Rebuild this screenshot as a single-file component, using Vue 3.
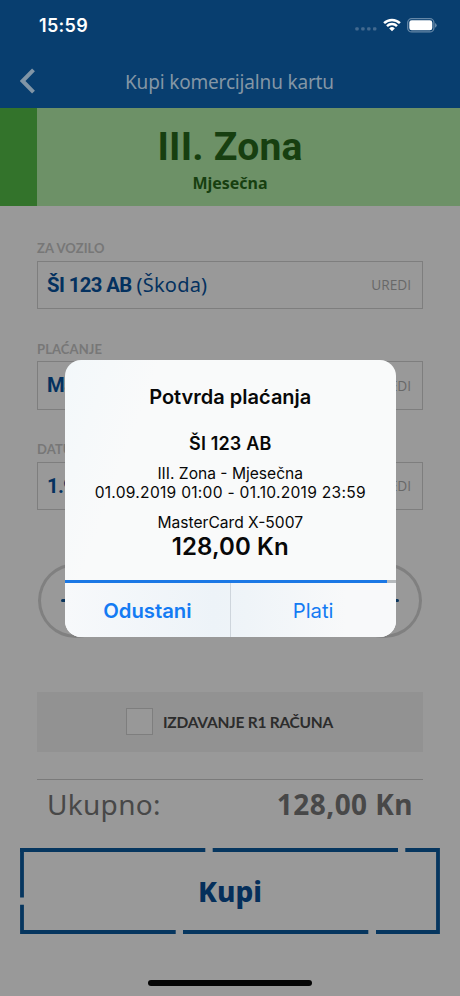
<script setup>
const fields = [
  { label: 'ZA VOZILO', strong: 'ŠI 123 AB', rest: '(Škoda)' },
  { label: 'PLAĆANJE', strong: 'MasterCard', rest: '' },
  { label: 'DATUM', strong: '1.9.', rest: '' },
]
</script>

<template>
  <div class="screen">
    <header class="top">
      <div class="status">
        <span class="clock">15:59</span>
        <div class="icons">
          <svg class="dots" width="22" height="4" viewBox="0 0 22 4">
            <rect v-for="i in 4" :key="i" :x="(i - 1) * 5.9 + 0.3" y="0.3" width="3.4" height="3.2" rx="1" />
          </svg>
          <svg class="wifi" width="18" height="14" viewBox="0 0 18 14">
            <path d="M1.1 5.1 A11.3 11.3 0 0 1 16.9 5.1" />
            <path d="M4 8.1 A7.2 7.2 0 0 1 14 8.1" />
            <path class="fan" d="M9 13.2 L6.2 10.4 A4 4 0 0 1 11.8 10.4 Z" />
          </svg>
          <svg class="battery" width="30" height="15" viewBox="0 0 30 15">
            <rect class="shell" x="0.7" y="0.7" width="26.2" height="13.2" rx="4" />
            <rect class="charge" x="2.3" y="2.3" width="23" height="10" rx="2.4" />
            <path class="cap" d="M28 5 Q29.7 5.7 29.7 7.3 T28 9.8 Z" />
          </svg>
        </div>
      </div>
      <nav class="nav">
        <svg class="back" width="16" height="26" viewBox="0 0 16 26"><path d="M13.5 1.8 L2.6 13 L13.5 24.2" /></svg>
        <h1 class="title">Kupi komercijalnu kartu</h1>
      </nav>
    </header>

    <section class="zone">
      <div class="stripe"></div>
      <div class="zone-body">
        <div class="zone-name">III. Zona</div>
        <div class="zone-type">Mjesečna</div>
      </div>
    </section>

    <main class="content">
      <div v-for="f in fields" :key="f.label" class="field">
        <div class="label"><span>{{ f.label }}</span></div>
        <div class="box">
          <span class="value"><b>{{ f.strong }}</b><span v-if="f.rest" class="rest">{{ f.rest }}</span></span>
          <span class="edit">UREDI</span>
        </div>
      </div>

      <div class="steppers">
        <div class="circle"><i></i></div>
        <div class="circle"><i></i></div>
      </div>

      <div class="invoice">
        <span class="check"></span>
        <span class="invoice-text">IZDAVANJE R1 RAČUNA</span>
      </div>

      <div class="total">
        <span class="total-label">Ukupno:</span>
        <span class="total-value">128,00 Kn</span>
      </div>
    </main>

    <div class="buy">
      <svg class="frame" width="420" height="86" viewBox="0 0 420 86">
        <path d="M0 2 H185.3 M192.7 2 H378 M385.3 2 H418 V84 H356 M348.3 84 H163 M155.7 84 H2 V56.8 M2 49.4 V2" />
      </svg>
      <span class="buy-text">Kupi</span>
    </div>
    <div class="home"></div>

    <div class="dialog">
      <div class="dialog-body">
        <div class="d-title">Potvrda plaćanja</div>
        <div class="d-plate">ŠI 123 AB</div>
        <div class="d-line zone-line">III. Zona - Mjesečna</div>
        <div class="d-line date-line">01.09.2019 01:00 - 01.10.2019 23:59</div>
        <div class="d-line card-line">MasterCard X-5007</div>
        <div class="d-price">128,00 Kn</div>
      </div>
      <div class="progress"><div class="bar"></div></div>
      <div class="actions">
        <div class="action cancel">Odustani</div>
        <div class="action pay">Plati</div>
      </div>
    </div>
  </div>
</template>

<style>
body { margin: 0; background: #999; }
</style>

<style scoped>
* { box-sizing: border-box; }
.screen {
  position: relative; width: 460px; height: 996px; overflow: hidden;
  display: flex; flex-direction: column; align-items: center;
  background: #999; font-family: "Noto Sans", sans-serif; white-space: nowrap;
}
svg { display: block; }
.top { width: 460px; height: 108px; background: #083e6f; }
.status { height: 50px; display: flex; justify-content: space-between; padding: 0 23.5px 0 39px; }
.clock { font: 600 18px/51px Inter, sans-serif; color: #fff; letter-spacing: 0.3px; }
.icons { display: flex; padding-top: 17.5px; }
.dots { margin: 9.5px 5.5px 0 0; fill: #42698f; }
.wifi { margin-right: 6px; fill: none; stroke: #fff; stroke-width: 2.5; }
.wifi .fan { fill: #fff; stroke: none; }
.shell { fill: none; stroke: #6487a7; stroke-width: 1.3; }
.charge { fill: #fff; }
.cap { fill: #6487a7; }
.nav { height: 58px; display: flex; align-items: center; padding: 4px 0 0 20px; }
.back { fill: none; stroke: #8195a6; stroke-width: 4; }
.title { margin: 2px 0 0 89px; font-weight: 400; font-size: 19px; line-height: 26px; color: #8496a5; letter-spacing: -0.17px; }
.zone { width: 460px; height: 98px; display: flex; background: #6d9167; }
.stripe { width: 37px; background: #33732b; }
.zone-body { flex: 1; padding: 16px 37px 0 0; text-align: center; color: #173f10; }
.zone-name { font: 700 39px/47px Roboto, sans-serif; letter-spacing: 0.2px; }
.zone-type { font: 700 16px/22px "Noto Sans", sans-serif; margin-top: 1px; }
.content { width: 386px; padding-top: 35px; }
.field { height: 100.5px; }
.label { height: 19.5px; font: 700 13px/15px Lato, sans-serif; color: #777; letter-spacing: 0.1px; }
.box {
  height: 48.5px; border: 1.5px solid #7e7e7e; display: flex; align-items: center; justify-content: space-between;
  padding: 0 11px 0 9px;
}
.value { color: #04315f; font-size: 20px; line-height: 28px; display: flex; align-items: baseline; gap: 5px; }
.value b { font-family: Roboto, sans-serif; font-size: 20.3px; letter-spacing: -0.6px; }
.rest { letter-spacing: 0.2px; }
.edit { font-family: "Open Sans", sans-serif; font-size: 13.7px; color: #686868; }
.steppers { display: flex; justify-content: space-between; height: 75px; margin-top: 20.5px; padding: 0 1px; }
.circle { width: 76px; height: 75px; border-radius: 50%; border: 3px solid #808080; display: flex; align-items: center; justify-content: center; }
.circle i { width: 30px; height: 3px; border-radius: 2px; background: #0b355c; }
.invoice { height: 60px; margin-top: 53.5px; background: #929292; display: flex; align-items: center; padding-left: 89px; }
.check { width: 27px; height: 27px; border: 1.3px solid #7e7e7e; background: #989898; }
.invoice-text { margin-left: 10px; font: 700 15.5px/20px Lato, sans-serif; letter-spacing: -0.25px; color: #2c2c2c; }
.total { margin-top: 27px; border-top: 1px solid #7a7a7a; height: 54px; display: flex; justify-content: space-between; align-items: center; padding: 0 10px 5px; color: #484848; font-size: 28px; }
.total-label { letter-spacing: 0.3px; }
.total-value { font-weight: 700; letter-spacing: 0.45px; }
.buy { position: relative; width: 420px; height: 86px; margin-top: 15px; display: flex; align-items: center; justify-content: center; }
.frame { position: absolute; left: 0; top: 0; fill: none; stroke: #06365f; stroke-width: 3.8; }
.buy-text { font-size: 28px; font-weight: 800; color: #052f5b; }
.home { width: 164px; height: 6px; border-radius: 3px; background: #050505; margin-top: 46px; }
.dialog {
  position: absolute; left: 65px; top: 359.5px; width: 330.5px; height: 277.5px; border-radius: 16px; overflow: hidden;
  background: linear-gradient(110deg, #f3f8fa 0, #f9fafa 22%, #f9fafa 100%);
  font-family: Inter, sans-serif; color: #080808; text-align: center;
}
.dialog-body { height: 220px; padding-top: 23.5px; }
.d-title { font-size: 20px; font-weight: 600; line-height: 28px; }
.d-plate { font-size: 18px; font-weight: 600; line-height: 24px; margin-top: 20.5px; letter-spacing: 0.15px; }
.d-line { font-size: 15.6px; line-height: 19px; }
.zone-line { margin-top: 8.5px; }
.date-line { letter-spacing: 0.26px; }
.card-line { margin-top: 10.5px; }
.d-price { font-size: 24px; font-weight: 600; line-height: 29px; letter-spacing: 0.1px; }
.progress { height: 3px; background: #b6babd; }
.bar { height: 3px; width: 322px; background: #1b78e5; }
.actions { height: 54.5px; display: flex; background: linear-gradient(90deg, #f7f9fb, #edf3f8 45%, #eff4f8 55%, #f8f9fa 85%); }
.action { flex: 1; font-size: 20.3px; line-height: 56px; color: #147bf3; }
.cancel { font-weight: 600; border-right: 1px solid #ced5dc; }
</style>
